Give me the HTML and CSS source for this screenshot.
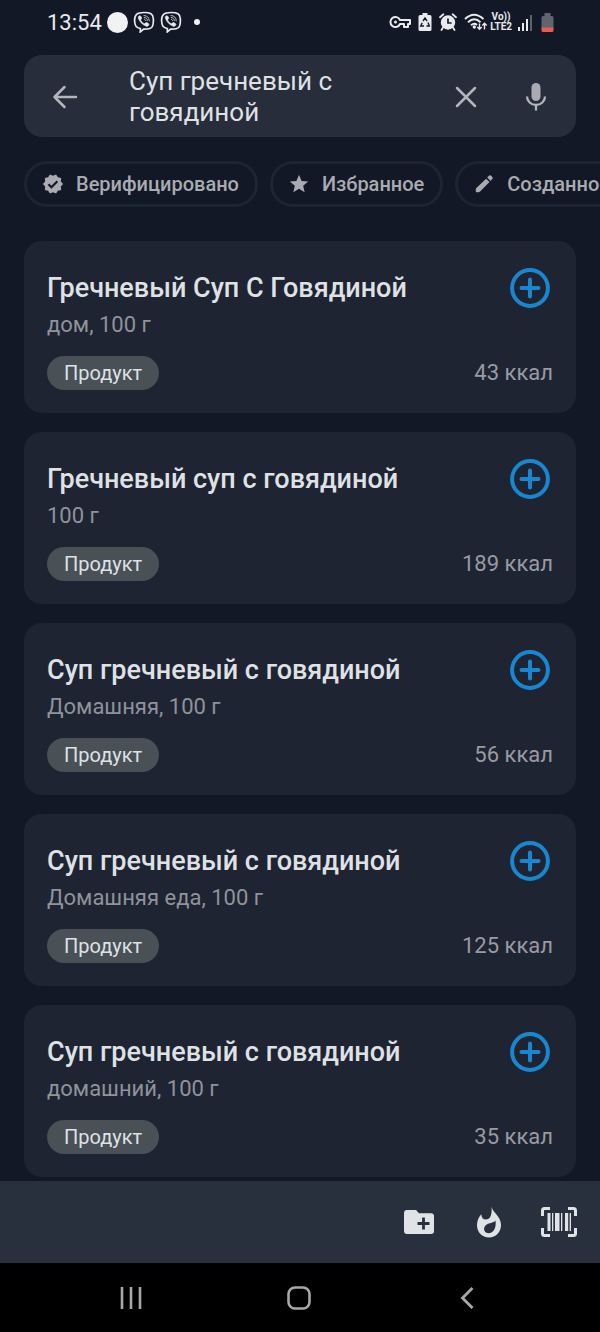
FILE: index.html
```html
<!DOCTYPE html>
<html lang="ru">
<head>
<meta charset="utf-8">
<meta name="viewport" content="width=device-width, initial-scale=1">
<title>Поиск продуктов</title>
<link rel="stylesheet" href="styles.css">
</head>
<body>
<svg class="sprite" aria-hidden="true">
  <symbol id="viber" viewBox="0 0 22 22">
    <path d="M11 1.500c6.500 0 9 1.200 9.300 6 .3 5-.2 7.500-1.700 9-1.400 1.300-4.800 1.700-8 1.600L7.300 20.900v-3.400C3.200 16.700 1.800 15 1.600 9.800 1.400 3.500 4 1.500 11 1.500z" fill="none" stroke="currentColor" stroke-width="1.700"/>
    <path d="M6.200 4.900c.7-.4 1.200-.1 1.800.7.800 1.200 1 1.800.1 2.600-.6.500-.5 1 .1 1.900.8 1.200 1.500 1.900 2.700 2.400.9.400 1.200-.1 1.800-.7.500-.5 1.100-.4 1.900.2 1.300.9 1.700 1.300 1 2.300-.6.900-1.400 1.400-2.300 1-4.100-1.700-6.700-4.500-7.900-8-.3-1-.1-1.900.8-2.400z" fill="currentColor" stroke="currentColor" stroke-width=".6"/>
    <path d="M11 4.500c3.300.2 5.200 2 5.300 5.400M11.200 6.400c2 .2 3.100 1.300 3.200 3.200M11.400 8.300c.7.100 1.100.5 1.200 1.200" fill="none" stroke="currentColor" stroke-width="1" opacity=".75" stroke-linecap="round"/>
  </symbol>
  <symbol id="plus-circle" viewBox="0 0 40 40">
    <circle cx="20" cy="20" r="17.900" fill="none" stroke="currentColor" stroke-width="4"/>
    <path d="M20 11.500v17M11.500 20h17" fill="none" stroke="currentColor" stroke-width="4" stroke-linecap="round"/>
  </symbol>
</svg>

<header class="status">
  <div class="status-group">
    <time>13:54</time>
    <span class="disc"></span>
    <svg width="22" height="22"><use href="#viber"/></svg>
    <svg width="22" height="22"><use href="#viber"/></svg>
    <span class="dot"></span>
  </div>
  <div class="status-group status-right">
    <svg width="22" height="14" viewBox="0 0 22 14" fill="none" stroke="currentColor" stroke-width="2"><path d="M11 5H21V9H19V12H15V9H11A5 5 0 1 1 11 5z" stroke-linejoin="round"/><circle cx="6.500" cy="7" r="1.500" fill="currentColor" stroke="none"/></svg>
    <svg width="14" height="20" viewBox="0 0 14 20"><path d="M4.500 1h5v2H12q1.500 0 1.500 1.500v13Q13.500 19 12 19H2Q.5 19 .5 17.500v-13Q.5 3 2 3h2.500z" fill="currentColor"/><path d="M5 9l2-3 2 3M10 10.500l1.300 3.500H8.500M6 14H2.700L4.200 10.700" fill="none" stroke="#121826" stroke-width="1.400"/></svg>
    <svg width="18" height="18" viewBox="0 0 18 18"><circle cx="9" cy="9.500" r="7.200" fill="currentColor"/><path d="M1 4.200L4.400 1.300M17 4.200L13.600 1.300M4 14.500L2.500 17M14 14.500l1.500 2.500" stroke="currentColor" stroke-width="1.800" stroke-linecap="round"/><path d="M9 5.500v4.500h3.600" fill="none" stroke="#121826" stroke-width="1.700"/></svg>
    <svg width="23" height="18" viewBox="0 0 23 18" fill="none" stroke="currentColor" stroke-width="1.900"><path d="M1 6Q10-2.500 19.500 6M4 9.200Q10.300 3.500 16.500 9.200M7 12.200Q10.300 9.500 13 12"/><circle cx="10.300" cy="14" r="1.700" fill="currentColor" stroke="none"/><path d="M15.500 10.500V16M13.300 14l2.200 2.300 2.200-2.300M20.500 16.500V10.500M18.300 12.500l2.200-2.300 2.200 2.300" stroke-width="1.400"/></svg>
    <span class="lte"><span>Vo))</span><span>LTE2</span></span>
    <svg width="17" height="17" viewBox="0 0 17 17" fill="currentColor"><rect x="1" y="13" width="2" height="4"/><rect x="5" y="9" width="2" height="8"/><rect x="9" y="5" width="2" height="12"/><rect x="13" y="1" width="2" height="16" opacity=".35"/></svg>
    <svg width="13" height="19" viewBox="0 0 13 19"><path d="M3.500 0h6v3H11q1.500 0 1.500 1.500V15H.5V4.500Q.5 3 2 3h1.500z" fill="#62646d"/><path d="M.5 14.500h12v3Q12.500 19 11 19H2Q.5 19 .5 17.500z" fill="#e65c50"/></svg>
  </div>
</header>

<form class="search" role="search">
  <button class="icon-button" type="button" aria-label="Назад"><svg width="26" height="26" viewBox="0 0 26 26" fill="none" stroke="currentColor" stroke-width="2.500" stroke-linecap="round" stroke-linejoin="round"><path d="M24 13H2.500M12.500 3l-10 10 10 10"/></svg></button>
  <textarea class="query" rows="2" aria-label="Поиск">Суп гречневый с говядиной</textarea>
  <button class="icon-button" type="button" aria-label="Очистить"><svg width="22" height="22" viewBox="0 0 22 22" fill="none" stroke="currentColor" stroke-width="2.500" stroke-linecap="round"><path d="M2 2l18 18M20 2L2 20"/></svg></button>
  <button class="icon-button" type="button" aria-label="Голосовой поиск"><svg width="22" height="30" viewBox="0 0 22 30"><rect x="6.500" y="1" width="9" height="18" rx="4.500" fill="#a9abb0"/><path d="M2 14.500a9 8.500 0 0 0 18 0M11 23v5.500" fill="none" stroke="currentColor" stroke-width="2.300"/></svg></button>
</form>

<nav class="chips" aria-label="Фильтры">
  <button class="chip" type="button"><svg width="22" height="22" viewBox="0 0 24 24"><path d="M23 12l-2.440-2.780.34-3.680-3.610-.82-1.890-3.180L12 3 8.600 1.540 6.710 4.720l-3.610.81.340 3.680L1 12l2.440 2.780-.34 3.690 3.610.82 1.890 3.180L12 21l3.400 1.460 1.890-3.180 3.610-.82-.34-3.680L23 12z" fill="currentColor"/><path d="M7 12.200l3.300 3.300 6.500-6.600" fill="none" stroke="#121826" stroke-width="2.300"/></svg>Верифицировано</button>
  <button class="chip" type="button"><svg width="22" height="22" viewBox="0 0 24 24"><path d="M12 17.270L18.180 21l-1.640-7.030L22 9.240l-7.190-.61L12 2 9.190 8.630 2 9.240l5.460 4.730L5.820 21z" fill="currentColor"/></svg>Избранное</button>
  <button class="chip" type="button"><svg width="22" height="22" viewBox="0 0 24 24"><path d="M14.300 6.200l3.700 3.700L8 20q-1 1-2.200 1H4q-1 0-1-1v-1.800Q3 17 4 16.200zM15.500 5l2.200-2.200q.9-.8 1.800 0l1.700 1.700q.9.900 0 1.800L19.200 8.700z" fill="currentColor"/></svg>Созданное</button>
</nav>

<main class="list">
  <article class="card">
    <div class="card-head"><h2>Гречневый Суп С Говядиной</h2><button class="add" type="button" aria-label="Добавить"><svg width="40" height="40"><use href="#plus-circle"/></svg></button></div>
    <p class="portion">дом, 100 г</p>
    <div class="card-foot"><span class="tag">Продукт</span><span class="energy">43 ккал</span></div>
  </article>
  <article class="card">
    <div class="card-head"><h2>Гречневый суп с говядиной</h2><button class="add" type="button" aria-label="Добавить"><svg width="40" height="40"><use href="#plus-circle"/></svg></button></div>
    <p class="portion">100 г</p>
    <div class="card-foot"><span class="tag">Продукт</span><span class="energy">189 ккал</span></div>
  </article>
  <article class="card">
    <div class="card-head"><h2>Суп гречневый с говядиной</h2><button class="add" type="button" aria-label="Добавить"><svg width="40" height="40"><use href="#plus-circle"/></svg></button></div>
    <p class="portion">Домашняя, 100 г</p>
    <div class="card-foot"><span class="tag">Продукт</span><span class="energy">56 ккал</span></div>
  </article>
  <article class="card">
    <div class="card-head"><h2>Суп гречневый с говядиной</h2><button class="add" type="button" aria-label="Добавить"><svg width="40" height="40"><use href="#plus-circle"/></svg></button></div>
    <p class="portion">Домашняя еда, 100 г</p>
    <div class="card-foot"><span class="tag">Продукт</span><span class="energy">125 ккал</span></div>
  </article>
  <article class="card">
    <div class="card-head"><h2>Суп гречневый с говядиной</h2><button class="add" type="button" aria-label="Добавить"><svg width="40" height="40"><use href="#plus-circle"/></svg></button></div>
    <p class="portion">домашний, 100 г</p>
    <div class="card-foot"><span class="tag">Продукт</span><span class="energy">35 ккал</span></div>
  </article>
</main>

<footer class="toolbar">
  <button class="icon-button" type="button" aria-label="Новая папка"><svg width="30" height="26" viewBox="0 0 30 26"><path d="M3 1h9l3 3.200h12q3 0 3 3V22q0 3-3 3H3q-3 0-3-3V4q0-3 3-3z" fill="currentColor"/><path d="M19.500 8.500v12M13.500 14.500h12" stroke="#29303d" stroke-width="2.800"/></svg></button>
  <button class="icon-button" type="button" aria-label="Калории"><svg width="26" height="32" viewBox="0 0 26 32"><path fill-rule="evenodd" d="M15.500.5c.7 5.500 9.500 9.500 9.500 18.500 0 7-5.200 12.500-12 12.500S1 26 1 19.200c0-4.700 1.800-8.200 4.300-11 .1 3.600 1.900 5.300 4.500 5.300 4.400 0 6.500-4.500 5.700-13zM19.500 14.500c-1.500 3-9.800 1.700-11.300 7.300-.7 3 1.300 5.400 4.400 5.400 4.600 0 8-4.800 6.900-12.700z" fill="currentColor"/></svg></button>
  <button class="icon-button" type="button" aria-label="Сканировать штрихкод"><svg width="36" height="30" viewBox="0 0 36 30"><path d="M9 1.500H3.500q-2 0-2 2V9M27 1.500h5.500q2 0 2 2V9M1.500 21v5.500q0 2 2 2H9M27 28.500h5.500q2 0 2-2V21" fill="none" stroke="currentColor" stroke-width="3"/><path d="M6.500 6h3v18h-3zM11 6h1.300v18H11zM14 6h4.500v18H14zM20 6h1.300v18H20zM24 6h3.200v18H24zM28.700 6H30v18h-1.300z" fill="currentColor"/></svg></button>
</footer>

<nav class="system" aria-label="Системная навигация">
  <button class="icon-button" type="button" aria-label="Недавние"><svg width="22" height="24" viewBox="0 0 22 24"><path d="M2 1v22M11 1v22M20 1v22" stroke="currentColor" stroke-width="2.600"/></svg></button>
  <button class="icon-button" type="button" aria-label="Домой"><svg width="24" height="24" viewBox="0 0 24 24"><rect x="1.500" y="1.500" width="21" height="21" rx="6.500" fill="none" stroke="currentColor" stroke-width="2.600"/></svg></button>
  <button class="icon-button" type="button" aria-label="Назад"><svg width="14" height="24" viewBox="0 0 14 24"><path d="M12.500 2L2.500 12l10 10" fill="none" stroke="currentColor" stroke-width="2.800"/></svg></button>
</nav>
</body>
</html>
```

FILE: styles.css
```css
* { box-sizing: border-box; }

body {
  margin: 0;
  height: 100vh;
  display: flex;
  flex-direction: column;
  overflow: hidden;
  background: #121826;
  color: #dfe1e5;
  font-family: Roboto, "Noto Sans", sans-serif;
}

svg { display: block; flex: none; }
.sprite { position: absolute; width: 0; height: 0; }

button {
  padding: 0;
  border: 0;
  background: none;
  color: inherit;
  font: inherit;
  flex: none;
}

.icon-button {
  width: 50px;
  height: 50px;
  display: grid;
  place-items: center;
}

.status {
  flex: none;
  height: 44px;
  padding: 0 46px 0 47px;
  display: flex;
  align-items: center;
  justify-content: space-between;
  color: #e8eaee;
}
.status-group { display: flex; align-items: center; gap: 5px; }
.status-group time { font-size: 22px; }
.status-right { gap: 7px; }
.disc { width: 21px; height: 21px; border-radius: 50%; background: #f1f2f4; }
.dot { width: 6px; height: 6px; margin-left: 7px; border-radius: 50%; background: #f1f2f4; }
.lte {
  display: flex;
  flex-direction: column;
  align-items: center;
  margin: 0 -2px 0 -4px;
  font-size: 10px;
  line-height: 10px;
  font-weight: 700;
}

.search {
  flex: none;
  margin: 11px 24px 0;
  padding: 11px 15px 9px 16px;
  min-height: 82px;
  display: flex;
  align-items: center;
  gap: 20px;
  border-radius: 18px;
  background: #272d3a;
  color: #b2b5bc;
}
.query {
  flex: 1;
  min-width: 0;
  height: 62px;
  margin-left: 19px;
  padding: 0 48px 0 0;
  border: 0;
  resize: none;
  overflow: hidden;
  background: none;
  color: #dfe1e5;
  font: 400 26px/31px Roboto, "Noto Sans", sans-serif;
}

.chips {
  flex: none;
  display: flex;
  gap: 12px;
  margin: 24px 0 0 24px;
  overflow: hidden;
}
.chip {
  height: 46px;
  padding: 0 16px 0 15px;
  display: flex;
  align-items: center;
  gap: 12px;
  border: 3px solid #1e2532;
  border-radius: 23px;
  color: #a9abb1;
  font-size: 20px;
  font-weight: 500;
}

.list {
  flex: 1;
  min-height: 0;
  margin-top: 34px;
  padding: 0 24px;
  display: flex;
  flex-direction: column;
  gap: 19px;
  overflow: hidden;
}
.card {
  flex: none;
  padding: 24px 23px 23px;
  border-radius: 18px;
  background: #1e2431;
}
.card-head { display: flex; align-items: center; justify-content: space-between; }
.card h2 { margin: 0; font-size: 27px; line-height: 32px; font-weight: 500; }
.add { padding: 3px; color: #1787d2; }
.portion { margin: 0; font-size: 22px; line-height: 28px; color: #8f939c; }
.card-foot {
  margin-top: 17px;
  display: flex;
  align-items: center;
  justify-content: space-between;
}
.tag {
  padding: 0 17px;
  border-radius: 17px;
  background: #495056;
  font-size: 20px;
  line-height: 34px;
}
.energy { font-size: 22px; line-height: 28px; color: #989ba3; }

.toolbar {
  flex: none;
  height: 82px;
  padding: 0 16px;
  display: flex;
  align-items: center;
  justify-content: flex-end;
  gap: 20px;
  background: #29303d;
  color: #e0e3e5;
}

.system {
  flex: none;
  height: 69px;
  padding: 0 49px 0 47px;
  display: flex;
  align-items: center;
  justify-content: space-around;
  background: #000;
  color: #a8a8a8;
}
```
